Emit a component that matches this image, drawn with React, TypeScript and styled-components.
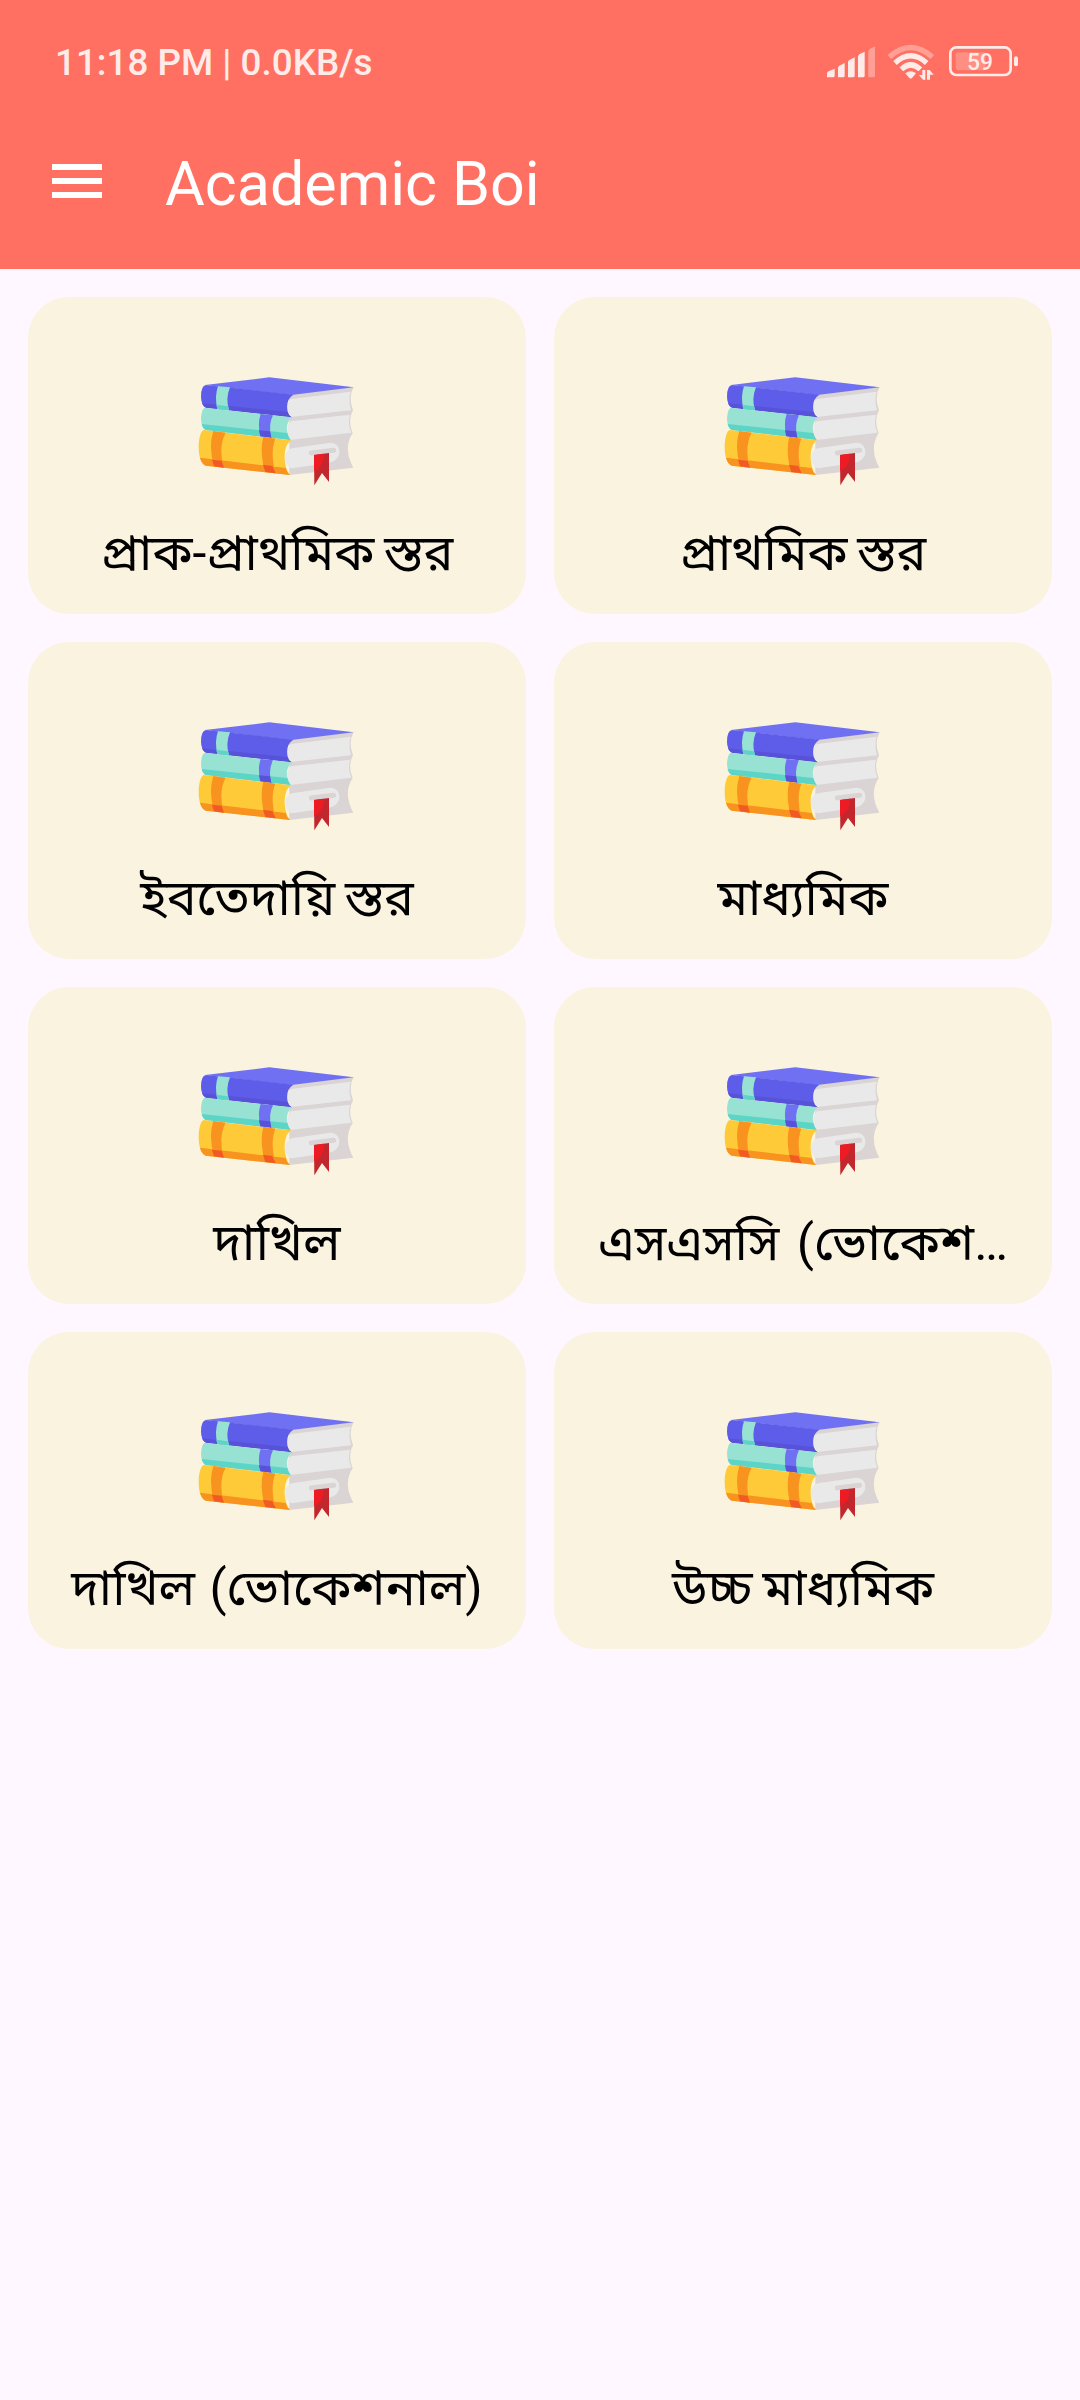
import React from "react";
import styled, { createGlobalStyle } from "styled-components";

const GlobalStyle = createGlobalStyle`
  * { box-sizing: border-box; }
  body { margin: 0; background: #fef7ff; }
`;

const Screen = styled.div`
  width: 1080px;
  min-height: 2400px;
  background: #fef7ff;
  font-family: Roboto, "Noto Sans Bengali", "Noto Sans", sans-serif;
`;

const Header = styled.header`
  height: 269px;
  background: #ff7062;
  display: flex;
  flex-direction: column;
`;

const StatusBar = styled.div`
  height: 124px;
  padding: 0 61px 0 55px;
  display: flex;
  align-items: center;
  justify-content: space-between;
`;

const StatusText = styled.span`
  margin-top: 1px;
  font-size: 36.8px;
  font-weight: 500;
  line-height: 44px;
  color: #ffece9;
  white-space: pre;
`;

const StatusIcons = styled.div`
  display: flex;
  align-items: center;
`;

const Toolbar = styled.div`
  height: 114px;
  padding-left: 52px;
  display: flex;
  align-items: center;
  gap: 63px;
`;

const MenuButton = styled.button`
  width: 50px;
  height: 34px;
  padding: 0;
  border: 0;
  background: none;
  display: flex;
  flex-direction: column;
  justify-content: space-between;
`;

const MenuLine = styled.span`
  width: 50px;
  height: 6px;
  background: #fff;
`;

const Title = styled.h1`
  margin: 5px 0 0;
  font-size: 61px;
  font-weight: 400;
  line-height: 72px;
  color: #fff;
`;

const Grid = styled.main`
  padding: 28px;
  display: grid;
  grid-template-columns: 498px 498px;
  grid-auto-rows: 317px;
  gap: 28px;
`;

const Card = styled.section`
  background: #faf3e0;
  border-radius: 41px;
  padding-top: 68px;
  display: flex;
  flex-direction: column;
  align-items: center;
`;

const Picture = styled.div`
  height: 130px;
  padding-left: 6px;
`;

const Label = styled.div<{ $size: number; $gap?: number }>`
  margin-top: 23px;
  height: 70px;
  line-height: 70px;
  font-size: ${(p) => p.$size}px;
  word-spacing: ${(p) => p.$gap ?? -2.5}px;
  color: #000;
  white-space: nowrap;
`;

const BatteryText = styled.text`
  font-family: Roboto, sans-serif;
  font-size: 70px;
  font-weight: 500;
`;

const StatusGlyphs = () => (
  <svg width="192" height="36" viewBox="81 68 576 108" fill="#ffece9">
    <path d="M81 168V156Q82 152 86 150L104 142V163Q104 168 99 168ZM114 168V139Q115 135 118 133L134 125V163Q134 168 129 168ZM144 168V122Q145 118 148 116L164 108V163Q164 168 159 168ZM174 168V106Q175 101 178 99L194 91V163Q194 168 189 168Z" />
    <path opacity=".38" d="M205 168V90Q206 85 209 83L225 75V163Q225 168 220 168H210Q205 168 205 168Z" />
    <g fill="none" stroke="#ffece9" strokeWidth="16">
      <path opacity=".38" d="M268 107Q332 50 397 107" />
      <path d="M285 125Q332 82 380 125" />
      <path d="M304 144Q332 117 361 144" />
    </g>
    <path d="M316 156Q332 144 348 156L336 170Q332 173 328 170Z" />
    <path d="M367 146H376V175H369L357 161H367ZM381 146H389L401 160H390V175H381Z" />
    <rect x="451" y="78" width="181" height="83" rx="18" fill="none" stroke="#ffece9" strokeWidth="8" />
    <rect x="467" y="93" width="90" height="54" rx="7" opacity=".25" />
    <rect x="642" y="105" width="12" height="30" rx="6" />
    <BatteryText x="540" y="147" textAnchor="middle" textLength="78" lengthAdjust="spacingAndGlyphs">59</BatteryText>
  </svg>
);

const Books = () => (
  <svg width="180" height="130" viewBox="0 0 540 390">
    <path fill="#dad4d4" d="M298 88L491 66Q474 96 489 136Q472 166 488 204Q458 250 490 308L298 330Z" />
    <path fill="#e9e9e9" d="M303 102L482 80Q474 104 483 136L302 156Q280 123 303 102Z" />
    <path fill="#e9e9e9" d="M302 169L480 149Q472 176 484 203L300 225Q282 190 302 169Z" />
    <path fill="#e9e9e9" d="M305 250L415 234C457 228 462 288 414 294L306 310C280 303 278 258 305 250Z" />
    <path stroke="#dad4d4" strokeWidth="15" strokeLinecap="round" d="M364 264L431 256" />
    <path fill="#7070f2" d="M45 60L238 37L491 67L304 90Z" />
    <path fill="#5d5de9" d="M48 60L310 89Q288 103 292 134Q294 151 305 157L48 128Q33 119 33 95Q33 62 48 60Z" />
    <path fill="#5852d8" d="M36 115L293 141Q295 152 305 157L48 128Q39 124 36 115Z" />
    <path fill="#98e2d4" d="M84 64L120 67Q106 101 117 136L82 132Q73 94 84 64Z" />
    <path fill="#5cd5c7" d="M79 119L114 124L117 136L82 132Z" />
    <path fill="#98e2d4" d="M44 128L304 157Q278 188 302 225L47 195Q33 186 33 159Q35 132 44 128Z" />
    <path fill="#5cd5c7" d="M35 177L292 204Q295 218 302 225L47 195Q39 192 35 177Z" />
    <path fill="#7070f2" d="M212 147L249 151Q234 179 244 218L211 214Q202 175 212 147Z" />
    <path fill="#5852d8" d="M207 196L240 199L244 218L211 214Z" />
    <path fill="#ffca38" d="M41 195L303 226Q282 240 284 282Q287 316 300 330L47 302C18 293 22 202 41 195Z" />
    <path fill="#f7931e" d="M30 278L287 309Q290 322 300 330L47 302Q35 296 30 278ZM70 198L107 203Q84 245 101 308L72 304Q55 245 70 198ZM220 215L256 221Q240 260 256 325L225 321Q208 259 220 215Z" />
    <path fill="#f15a24" d="M66 284L95 287L102 308L72 304ZM219 299L247 303L257 325L226 321Z" />
    <path fill="#c1272d" d="M372 270L417 264V351L396 324L373 361Z" />
    <path fill="#ed1c24" d="M372 270L402 266Q402 306 372 318Z" />
  </svg>
);

const levels = [
  { name: "প্রাক-প্রাথমিক স্তর", size: 50 },
  { name: "প্রাথমিক স্তর", size: 49.9 },
  { name: "ইবতেদায়ি স্তর", size: 49.9 },
  { name: "মাধ্যমিক", size: 49.8 },
  { name: "দাখিল", size: 51.4 },
  { name: "এসএসসি (ভোকেশ…", size: 50.4, gap: 5 },
  { name: "দাখিল (ভোকেশনাল)", size: 50, gap: 2 },
  { name: "উচ্চ মাধ্যমিক", size: 50 },
];

export default function App() {
  return (
    <Screen lang="bn">
      <GlobalStyle />
      <Header>
        <StatusBar>
          <StatusText>11:18 PM | 0.0KB/s</StatusText>
          <StatusIcons>
            <StatusGlyphs />
          </StatusIcons>
        </StatusBar>
        <Toolbar>
          <MenuButton aria-label="Menu">
            <MenuLine />
            <MenuLine />
            <MenuLine />
          </MenuButton>
          <Title>Academic Boi</Title>
        </Toolbar>
      </Header>
      <Grid>
        {levels.map(({ name, size, gap }) => (
          <Card key={name}>
            <Picture>
              <Books />
            </Picture>
            <Label $size={size} $gap={gap}>{name}</Label>
          </Card>
        ))}
      </Grid>
    </Screen>
  );
}
